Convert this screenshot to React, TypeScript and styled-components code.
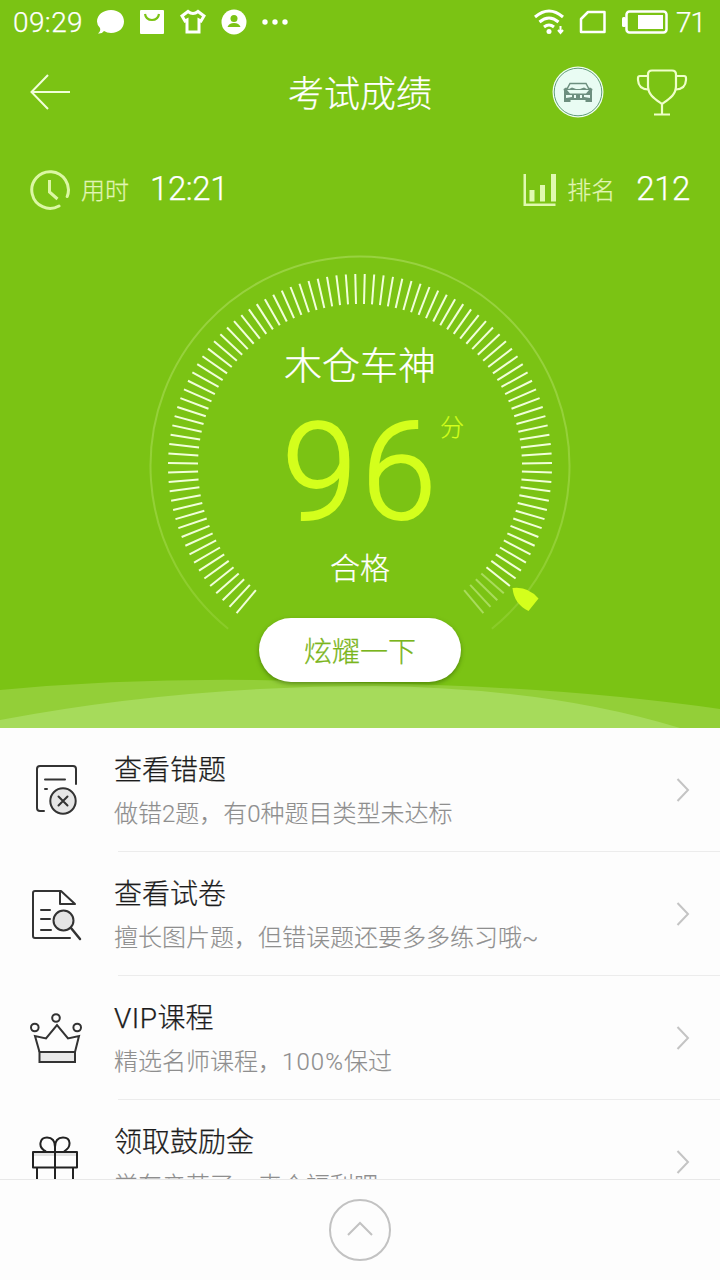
import React from 'react';
import styled, { createGlobalStyle } from 'styled-components';

const GlobalStyle = createGlobalStyle`
  * { box-sizing: border-box; }
  body {
    margin: 0;
    background: #fdfdfd;
    font-family: Roboto, "Noto Sans CJK SC", sans-serif;
    font-weight: 300;
    -webkit-text-stroke: 0.25px;
  }
  svg { display: block; flex: none; }
`;

const Screen = styled.main`
  width: 720px;
  height: 1280px;
  display: flex;
  flex-direction: column;
  overflow: hidden;
`;

const Hero = styled.section`
  position: relative;
  height: 728px;
  flex: none;
  display: flex;
  flex-direction: column;
  background: #7bc314;
  color: #fff;
`;

const StatusBar = styled.div`
  height: 44px;
  display: flex;
  align-items: center;
  justify-content: space-between;
  padding: 0 15px 0 13px;
`;

const StatusGroup = styled.div`
  display: flex;
  align-items: center;
  gap: 14px;
`;

const SignalGroup = styled(StatusGroup)`
  gap: 13px;
  svg:last-of-type {
    margin: 0 -5px 0 2px;
  }
`;

const StatusText = styled.span<{ $spacing: number }>`
  font-size: 28px;
  line-height: 44px;
  padding-top: 1px;
  letter-spacing: ${(p) => p.$spacing}px;
`;

const NavBar = styled.header`
  height: 96px;
  flex: none;
  display: grid;
  grid-template-columns: 230px 1fr 230px;
  align-items: center;
  padding: 0 30px;
`;

const Title = styled.h1`
  margin: 0;
  font-size: 36px;
  font-weight: 300;
  line-height: 50px;
  text-align: center;
  padding-top: 6px;
`;

const NavActions = styled.div`
  display: flex;
  justify-content: flex-end;
  align-items: center;
  gap: 32px;
  padding-right: 2px;
`;

const Stats = styled.div`
  height: 100px;
  display: flex;
  justify-content: space-between;
  align-items: center;
  padding: 0 30px;
`;

const Stat = styled.div`
  display: flex;
  align-items: center;
  svg {
    margin-top: -1px;
  }
`;

const StatLabel = styled.span`
  font-size: 24px;
  line-height: 36px;
  padding-top: 2px;
  margin: 0 21px 0 11px;
  color: #e0f5b4;
`;

const StatValue = styled.span`
  font-size: 33px;
  line-height: 40px;
  letter-spacing: -0.4px;
  margin-top: -3px;
`;

const Decoration = styled.svg`
  position: absolute;
  left: 0;
  bottom: 0;
`;

const Gauge = styled.div`
  position: relative;
  width: 440px;
  height: 378px;
  margin: 0 auto;
  display: flex;
  flex-direction: column;
  align-items: center;
`;

const Dial = styled.svg`
  position: absolute;
  left: 0;
  top: 0;
`;

const Rank = styled.div`
  margin-top: 98px;
  font-size: 38px;
  line-height: 56px;
`;

const Score = styled.div`
  position: relative;
  margin-top: 3px;
  height: 130px;
  padding-left: 3px;
  font-size: 135px;
  line-height: 153px;
  letter-spacing: 4.5px;
  color: #d4ff1c;
  -webkit-text-stroke: 2px;
`;

const Unit = styled.span`
  position: absolute;
  left: calc(100% - 1px);
  top: 13px;
  font-size: 24px;
  line-height: 36px;
  letter-spacing: 0;
  -webkit-text-stroke: 0.2px;
`;

const Verdict = styled.div`
  margin-top: 20px;
  font-size: 30px;
  line-height: 44px;
`;

const ShareButton = styled.button`
  position: relative;
  align-self: center;
  width: 202px;
  height: 64px;
  border: 0;
  border-radius: 32px;
  background: #fff;
  box-shadow: 0 2px 4px rgba(50, 90, 0, 0.55);
  color: #7bb51c;
  font: inherit;
  font-size: 28px;
  line-height: 58px;
  padding: 6px 0 0;
`;

const List = styled.ul`
  list-style: none;
  margin: 0;
  padding: 0;
  height: 451px;
  flex: none;
  overflow: hidden;
`;

const Row = styled.li`
  height: 124px;
  display: grid;
  grid-template-columns: 84px 1fr 14px;
  align-items: center;
  padding: 0 30px;
  background: linear-gradient(#ececec, #ececec) 118px 100% / 602px 1px no-repeat;
`;

const RowText = styled.div`
  padding-top: 3px;
`;

const RowTitle = styled.div`
  font-size: 28px;
  line-height: 42px;
  color: #1c1c1c;
`;

const RowNote = styled.div`
  margin-top: 3px;
  font-size: 24px;
  line-height: 38px;
  color: #8e8e8e;
  white-space: nowrap;
  -webkit-text-stroke: 0.15px;
`;

const Spaced = styled.span<{ $by: number }>`
  letter-spacing: ${(p) => p.$by}px;
`;

const Footer = styled.footer`
  height: 101px;
  flex: none;
  border-top: 1px solid #e8e8e8;
  display: flex;
  align-items: center;
  justify-content: center;
`;

const polar = (deg: number, r: number) => {
  const a = (deg * Math.PI) / 180;
  return [220 + Math.sin(a) * r, 226 - Math.cos(a) * r];
};

const TICKS = Array.from({ length: 100 }, (_, i) => {
  const deg = -140 + (i * 280) / 99;
  return { from: polar(deg, 162), to: polar(deg, 192), on: i < 96 };
});

const ScoreDial = () => {
  const [sx, sy] = polar(-141, 209.5);
  const [ex, ey] = polar(141, 209.5);
  return (
    <Dial width="440" height="400" fill="none">
      <defs>
        <linearGradient id="ring" x1="0" y1="0" x2="0" y2="1">
          <stop offset="0" stopColor="#98d240" />
          <stop offset="0.75" stopColor="#93d035" />
          <stop offset="1" stopColor="#93d035" stopOpacity="0.6" />
        </linearGradient>
      </defs>
      <path d={`M${sx} ${sy}A209.5 209.5 0 1 1 ${ex} ${ey}`} stroke="url(#ring)" strokeWidth="2" />
      {TICKS.map((t, i) => (
        <line
          key={i}
          x1={t.from[0]}
          y1={t.from[1]}
          x2={t.to[0]}
          y2={t.to[1]}
          stroke={t.on ? '#f1ffd9' : '#a9dc5c'}
          strokeWidth="2"
        />
      ))}
      <path d="M372.500 348Q388 346 398.500 358.500L388.500 371Q374 364 372.500 348Z" fill="#d4ff1c" />
    </Dial>
  );
};

const BackIcon = () => (
  <svg width="41" height="36" fill="none" stroke="#f1ffd9" strokeWidth="2">
    <path d="M40 18H1.500M18 1L1.500 18L18 35" />
  </svg>
);

const CarBadge = () => (
  <svg width="52" height="52" fill="none">
    <circle cx="26" cy="26" r="25.500" fill="#f2fff2" />
    <circle cx="26" cy="26" r="23.800" stroke="#5f9c78" strokeWidth="1" fill="#e9fcf3" />
    <path d="M15 23L18 17.500H34L37 23" stroke="#6d8f7f" strokeWidth="1.500" />
    <path
      fillRule="evenodd"
      fill="#6d8f7f"
      d="M11.500 23L14 21.500L17 23L20 21.500L24 23H28L32 21.500L35 23L38 21.500L40.500 23L40 25V36H33.500V34H18.500V36H12V25ZM15 24L18 27.500H34L37 24ZM14 29V32L20 31V29ZM32 29V31L38 32V29ZM22 29V32H24V29ZM28 29V32H30V29Z"
    />
  </svg>
);

const TrophyIcon = () => (
  <svg width="52" height="48" viewBox="0 0 52 48" fill="none" stroke="#efffc9" strokeWidth="2.200">
    <path d="M16 2.500H36Q40 2.500 40 6.500V18C40 27 33 31 26 36C19 31 12 27 12 18V6.500Q12 2.500 16 2.500Z" />
    <path d="M12 8H4Q2 8 2 10V12Q2.500 21 12 21.500M40 8H48Q50 8 50 10V12Q49.500 21 40 21.500M26 36V46M18 46.500H34" />
  </svg>
);

const ClockIcon = () => (
  <svg width="40" height="40" fill="none" stroke="#dcf7a4" strokeWidth="3">
    <path d="M37.200 26.500A18.300 18.300 0 1 0 29 36" strokeLinecap="round" />
    <path d="M19.500 10V22L27.500 29" />
  </svg>
);

const RankIcon = () => (
  <svg width="33" height="34" fill="#e0f9b0">
    <path d="M0.500 1H3V30.500H32.500V33H0.500ZM6.500 17H11.500V28.500H6.500ZM17 12H22V28.500H17ZM28 1H33V28.500H28Z" />
  </svg>
);

const Chevron = () => (
  <svg width="14" height="24" fill="none" stroke="#c4c4c4" strokeWidth="2">
    <path d="M1.500 1L12 12L1.500 23" />
  </svg>
);

const WrongIcon = () => (
  <svg width="54" height="54" fill="none" stroke="#333" strokeWidth="2" strokeLinecap="round">
    <path d="M14 48H10Q7 48 7 45V6Q7 3 10 3H43Q46 3 46 6V21M15 16.500H35M15 26H17" />
    <circle cx="33" cy="38" r="12.700" fill="#e5e5e5" />
    <path d="M28.500 33.500L37.500 42.500M37.500 33.500L28.500 42.500" />
  </svg>
);

const PaperIcon = () => (
  <svg width="54" height="54" fill="none" stroke="#333" strokeWidth="2" strokeLinecap="round" strokeLinejoin="round">
    <path d="M40 51H5Q3 51 3 49V6Q3 4 5 4H31L45 17H30V4M11 23H20M11 32H20M11 43H21" />
    <circle cx="33.500" cy="33.500" r="10" fill="#e5e5e5" />
    <path d="M41 41L50 52" strokeWidth="2.500" />
  </svg>
);

const CrownIcon = () => (
  <svg width="54" height="54" fill="none" stroke="#333" strokeWidth="2">
    <path d="M9.500 41H45V51H9.500Z" fill="#e8e8e8" />
    <path d="M9.500 41L5 25L16 27.500L27 14L38 27.500L49 25L45 41" />
    <circle cx="26" cy="7" r="3.800" />
    <circle cx="4.800" cy="16.500" r="3.800" />
    <circle cx="47.200" cy="16.500" r="3.800" />
  </svg>
);

const GiftIcon = () => (
  <svg width="54" height="54" fill="none" stroke="#222" strokeWidth="2">
    <path d="M4 19H46" stroke="#e2e2e2" strokeWidth="4" />
    <path d="M3 17H47V32.500H3Z" strokeLinejoin="round" />
    <path d="M25 10V54M7 33V53H43V33M16 16.500C7 12 10 2.500 17 2.500C22 2.500 25 6 25 12C25 6 28 2.500 33 2.500C41 2.500 42 12 34 16.500" />
  </svg>
);

const ROWS = [
  { id: 'wrong', icon: <WrongIcon />, title: '查看错题', note: '做错2题，有0种题目类型未达标' },
  { id: 'paper', icon: <PaperIcon />, title: '查看试卷', note: '擅长图片题，但错误题还要多多练习哦~' },
  {
    id: 'vip',
    icon: <CrownIcon />,
    title: <><Spaced $by={0.5}>VIP</Spaced>课程</>,
    note: <>精选名师课程，<Spaced $by={1.1}>100%</Spaced>保过</>,
  },
  { id: 'gift', icon: <GiftIcon />, title: '领取鼓励金', note: '学车辛苦了，来个福利吧' },
];

export default function App() {
  return (
    <>
      <GlobalStyle />
      <Screen>
        <Hero>
          <Decoration width="720" height="52" viewBox="0 0 720 52">
            <path d="M0 14Q170 -2 360 7Q560 10 720 33V52H0Z" fill="#93cf38" />
            <path d="M0 44Q180 10 375 10Q550 12 680 52H0Z" fill="#a6db5b" />
          </Decoration>
          <StatusBar>
            <StatusGroup>
              <StatusText $spacing={0.4}>09:29</StatusText>
              <svg width="28" height="26" fill="#fff">
                <path d="M14 1C22 1 27 6 27 12.500S22 24 14 24Q10 24 7 22Q5 25 1 24.500Q4 22 3 19Q0 16 0 12.500C0 6 6 1 14 1Z" />
              </svg>
              <svg width="26" height="26" fill="none">
                <rect x="1" y="1" width="24" height="24" rx="1" fill="#fff" />
                <path d="M6 5Q7 11 13 11T20 5" stroke="#7bc314" strokeWidth="2.200" />
              </svg>
              <svg width="28" height="26" fill="none" stroke="#fff" strokeWidth="3">
                <path d="M9 2.500Q14 6.500 19 2.500L25 7L22 12L20 11V23H8V11L6 12L3 7Z" />
              </svg>
              <svg width="26" height="26">
                <circle cx="13" cy="13" r="12.500" fill="#fff" />
                <circle cx="13" cy="9.500" r="3.500" fill="#7bc314" />
                <path d="M6.500 18Q8 14 13 14T19.500 18Z" fill="#7bc314" />
              </svg>
              <svg width="28" height="8" fill="#fff">
                <circle cx="4" cy="4" r="2.700" />
                <circle cx="14" cy="4" r="2.700" />
                <circle cx="24" cy="4" r="2.700" />
              </svg>
            </StatusGroup>
            <SignalGroup>
              <svg width="32" height="28" fill="none" stroke="#fff" strokeWidth="3">
                <path d="M1 9Q15 -3 29 9M5.500 14Q15 6 24.500 14M10 19Q15 15 20 19" />
                <circle cx="15" cy="23.500" r="2.500" fill="#fff" stroke="none" />
                <path d="M26.500 18V24M24 22L26.500 25L29 22" strokeWidth="2" />
              </svg>
              <svg width="28" height="24" fill="none" stroke="#fff" strokeWidth="2.500">
                <path d="M9 2H25.500V22H2V9Z" strokeLinejoin="round" />
              </svg>
              <svg width="46" height="24">
                <rect x="4.500" y="1.500" width="40" height="21" rx="3" fill="none" stroke="#fff" strokeWidth="2.500" />
                <rect x="0" y="7" width="4" height="10" rx="1.500" fill="#fff" />
                <rect x="16" y="5" width="25" height="14" fill="#fff" />
              </svg>
              <StatusText $spacing={-1}>71</StatusText>
            </SignalGroup>
          </StatusBar>
          <NavBar>
            <BackIcon />
            <Title>考试成绩</Title>
            <NavActions>
              <CarBadge />
              <TrophyIcon />
            </NavActions>
          </NavBar>
          <Stats>
            <Stat>
              <ClockIcon />
              <StatLabel>用时</StatLabel>
              <StatValue>12:21</StatValue>
            </Stat>
            <Stat>
              <RankIcon />
              <StatLabel>排名</StatLabel>
              <StatValue>212</StatValue>
            </Stat>
          </Stats>
          <Gauge>
            <ScoreDial />
            <Rank>木仓车神</Rank>
            <Score>
              96
              <Unit>分</Unit>
            </Score>
            <Verdict>合格</Verdict>
          </Gauge>
          <ShareButton>炫耀一下</ShareButton>
        </Hero>
        <List>
          {ROWS.map((r) => (
            <Row key={r.id}>
              {r.icon}
              <RowText>
                <RowTitle>{r.title}</RowTitle>
                <RowNote>{r.note}</RowNote>
              </RowText>
              <Chevron />
            </Row>
          ))}
        </List>
        <Footer>
          <svg width="62" height="62" fill="none" stroke="#c2c2c2" strokeWidth="2">
            <circle cx="31" cy="31" r="30" />
            <path d="M19 36L31 24L43 36" />
          </svg>
        </Footer>
      </Screen>
    </>
  );
}
